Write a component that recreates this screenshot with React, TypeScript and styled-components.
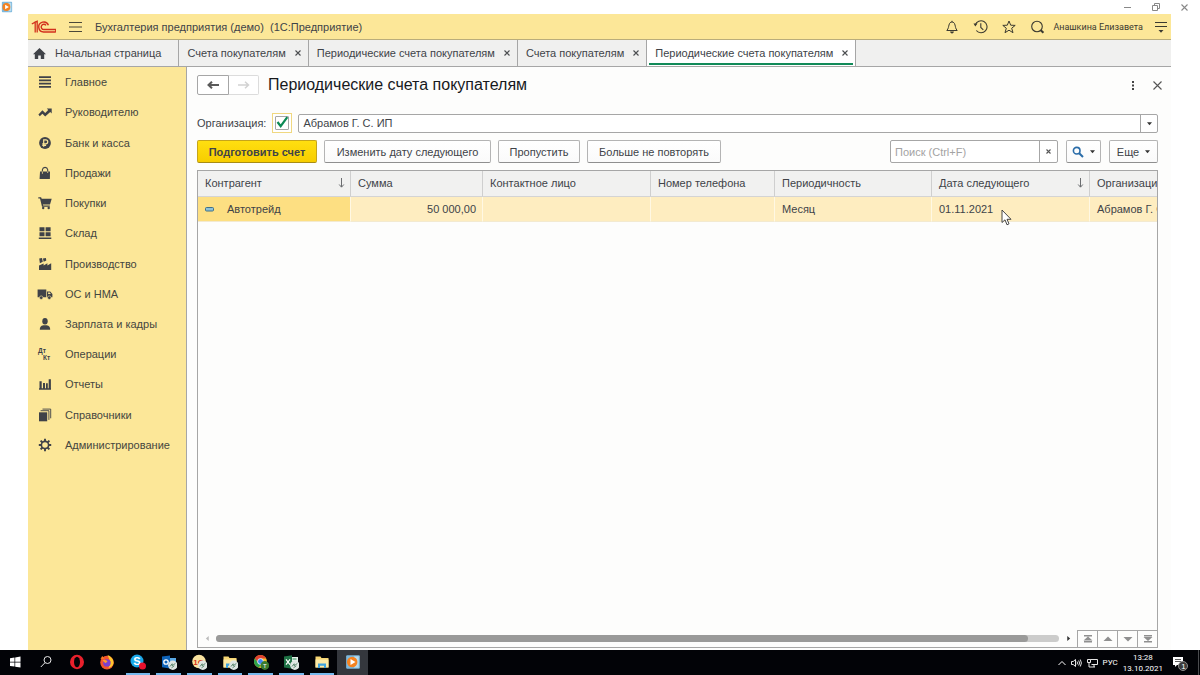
import React from "react";
import styled, { createGlobalStyle, css } from "styled-components";

const line = "#a6a6a6";
const yellow = "#fce798";
const ink = "#404348";
const mark = "#3f4248";

const GlobalStyle = createGlobalStyle`
  *, *::before, *::after { box-sizing: border-box; }
  html, body { margin: 0; height: 100%; }
  #root { height: 100%; }
  body {
    background: #fff;
    color: ${ink};
    font-family: "Liberation Sans", Arial, sans-serif;
    font-size: 11px;
    line-height: 16px;
    overflow: hidden;
  }
  button, input, select { font: inherit; color: inherit; margin: 0; }
  button { cursor: pointer; }
  svg { display: block; flex: none; }
`;

const Screen = styled.div`
  display: flex;
  flex-direction: column;
  height: 100vh;
`;

const WindowBar = styled.div`
  display: flex;
  align-items: center;
  flex: none;
  height: 14px;
  padding: 0 12px 0 1px;
`;

const WindowButtons = styled.div`
  display: flex;
  gap: 19px;
  margin-left: auto;
`;

const PlainButton = styled.button`
  display: flex;
  align-items: center;
  justify-content: center;
  flex: none;
  padding: 0;
  border: 0;
  background: none;
`;

const AppFrame = styled.div`
  display: flex;
  flex-direction: column;
  flex: 1;
  min-height: 0;
  margin: 0 29px 0 28px;
  background: #fdfdfc;
`;

const Header = styled.header`
  display: flex;
  align-items: center;
  flex: none;
  gap: 13px;
  height: 26px;
  padding: 0 3px;
  background: ${yellow};
  border-bottom: 1px solid #b9ad7b;
`;

const AppTitle = styled.span`
  white-space: pre;
`;

const HeaderTools = styled.div`
  display: flex;
  align-items: center;
  gap: 14px;
  margin-left: auto;
`;

const User = styled.a`
  margin: 0 -3px 0 -6px;
  color: #3b3a30;
  font-family: Roboto, sans-serif;
  font-size: 9px;
  text-decoration: none;
`;

const Tabs = styled.nav`
  display: flex;
  flex: none;
  height: 27px;
  background: #f0f0ef;
  border-bottom: 1px solid ${line};
`;

const Tab = styled.div<{ $active?: boolean; $home?: boolean }>`
  display: flex;
  align-items: center;
  gap: 9px;
  padding: ${(p) => (p.$home ? "0 17px 0 5px" : "0 7px 0 8px")};
  border-right: 1px solid ${line};
  ${(p) =>
    p.$active &&
    css`
      background: #fff;
      padding: 0 2px 1px 2px;
    `}
`;

const TabInner = styled.div<{ $active?: boolean }>`
  display: flex;
  align-items: center;
  gap: 9px;
  height: 100%;
  ${(p) =>
    p.$active &&
    css`
      padding: 3px 5px 0 6px;
      border-bottom: 2px solid #118a58;
    `}
`;

const TabLink = styled.a`
  color: inherit;
  text-decoration: none;
  white-space: nowrap;
`;

const Body = styled.div`
  display: flex;
  flex: 1;
  min-height: 0;
`;

const Sidebar = styled.nav`
  flex: none;
  width: 159px;
  background: ${yellow};
  border-right: 1px solid ${line};
`;

const Menu = styled.ul`
  display: flex;
  flex-direction: column;
  height: 393px;
  margin: 0;
  padding: 0;
  list-style: none;
`;

const MenuItem = styled.li`
  display: flex;
  flex: 1;
`;

const MenuLink = styled.a`
  display: flex;
  align-items: center;
  flex: 1;
  gap: 12px;
  padding-left: 9px;
  color: #45463f;
  text-decoration: none;
  white-space: nowrap;
`;

const Main = styled.main`
  display: flex;
  flex-direction: column;
  flex: 1;
  min-width: 0;
  padding: 8px 13px 2px 10px;
`;

const TitleRow = styled.div`
  display: flex;
  align-items: center;
  height: 20px;
`;

const History = styled.div`
  display: flex;
`;

const HistoryButton = styled.button<{ $side: "left" | "right" }>`
  display: flex;
  align-items: center;
  justify-content: center;
  width: 32px;
  height: 20px;
  padding: 0;
  background: #fff;
  border: 1px solid ${(p) => (p.$side === "left" ? line : "#dcdcdc")};
  border-radius: ${(p) => (p.$side === "left" ? "2px 0 0 2px" : "0 2px 2px 0")};
  ${(p) => p.$side === "right" && "border-left: 0; width: 30px;"}
`;

const PageTitle = styled.h1`
  margin: 0 0 0 9px;
  color: #17191c;
  font-size: 16px;
  font-weight: 400;
  line-height: 20px;
`;

const TitleTools = styled.div`
  display: flex;
  align-items: center;
  gap: 18px;
  margin: 0 -4px 0 auto;
`;

const FilterRow = styled.div`
  display: flex;
  align-items: center;
  height: 20px;
  margin-top: 18px;
`;

const CheckFrame = styled.span`
  display: grid;
  place-items: center;
  width: 20px;
  height: 20px;
  margin: 0 6px;
  border: 1px solid #f0d880;
  background: #fff;
  > * { grid-area: 1 / 1; }
`;

const Check = styled.input`
  appearance: none;
  width: 14px;
  height: 14px;
  border: 1px solid ${line};
  border-radius: 1px;
  &:not(:checked) + svg { visibility: hidden; }
`;

const Tick = styled.svg`
  pointer-events: none;
`;

const SelectBox = styled.div`
  display: grid;
  flex: 1;
  align-items: stretch;
  > * { grid-area: 1 / 1; }
`;

const Select = styled.select`
  appearance: none;
  height: 19px;
  padding: 0 20px 0 4px;
  background: #fff;
  border: 1px solid ${line};
  border-radius: 2px;
`;

const SelectArrow = styled.span`
  display: flex;
  align-items: center;
  justify-content: center;
  justify-self: end;
  width: 18px;
  border-left: 1px solid ${line};
  pointer-events: none;
`;

const Toolbar = styled.div`
  display: flex;
  align-items: center;
  gap: 7px;
  height: 23px;
  margin-top: 7px;
`;

const Button = styled.button<{ $primary?: boolean; $width: number }>`
  display: flex;
  align-items: center;
  justify-content: center;
  gap: 6px;
  flex: none;
  width: ${(p) => p.$width}px;
  height: 23px;
  padding: 0;
  background: ${(p) => (p.$primary ? "linear-gradient(#ffdf10, #f7cd00)" : "linear-gradient(#fff, #fafafa)")};
  border: 1px solid ${(p) => (p.$primary ? "#c6a51a" : "#b4b4b4")};
  border-bottom-color: ${(p) => (p.$primary ? "#a88c14" : "#8f8f8f")};
  border-radius: 2px;
  font-weight: ${(p) => (p.$primary ? 700 : 400)};
  white-space: nowrap;
`;

const ToolbarEnd = styled.div`
  display: flex;
  gap: 8px;
  margin-left: auto;
`;

const Search = styled.div`
  display: flex;
  width: 168px;
  height: 23px;
  background: #fff;
  border: 1px solid ${line};
  border-radius: 2px;
`;

const SearchInput = styled.input`
  flex: 1;
  min-width: 0;
  padding: 0 4px;
  border: 0;
  background: none;
  outline: 0;
  &::placeholder { color: #a3a3a3; opacity: 1; }
`;

const ClearButton = styled(PlainButton)`
  width: 18px;
  border-left: 1px solid ${line};
`;

const ListFrame = styled.section`
  display: flex;
  flex-direction: column;
  flex: 1;
  min-height: 0;
  margin-top: 7px;
  border: 1px solid ${line};
`;

const ListView = styled.div`
  flex: 1;
  min-height: 0;
  overflow: hidden;
`;

const Table = styled.table`
  width: 100%;
  table-layout: fixed;
  border-collapse: separate;
  border-spacing: 0;
`;

const Th = styled.th`
  height: 26px;
  padding: 0 5px 1px 7px;
  background: #f1f1f0;
  border-right: 1px solid #cfcfcf;
  border-bottom: 1px solid #d4d4d4;
  font-weight: 400;
  text-align: left;
  white-space: nowrap;
  overflow: hidden;
  &:last-child { border-right: 0; padding-right: 0; }
`;

const HeadCell = styled.span`
  display: flex;
  align-items: center;
  justify-content: space-between;
`;

const Td = styled.td<{ $selected?: boolean; $right?: boolean }>`
  height: 25px;
  padding: 0 6px 0 7px;
  background: ${(p) => (p.$selected ? "#fddf82" : "#feedc0")};
  border-right: 1px solid #fff8e3;
  border-bottom: 1px solid #f3ead0;
  text-align: ${(p) => (p.$right ? "right" : "left")};
  white-space: nowrap;
  overflow: hidden;
  &:last-child { border-right: 0; padding-right: 0; }
`;

const NameCell = styled.span`
  display: flex;
  align-items: center;
  gap: 13px;
`;

const ScrollRow = styled.div`
  display: flex;
  align-items: center;
  flex: none;
  height: 17px;
`;

const ScrollEnd = styled.span`
  display: flex;
  justify-content: center;
  width: 18px;
`;

const Track = styled.div`
  flex: 1;
  height: 7px;
  background: #cccccb;
  border-radius: 4px;
`;

const Thumb = styled.div`
  width: 96.3%;
  height: 7px;
  background: #9a9a99;
  border-radius: 4px;
`;

const StepButton = styled(PlainButton)`
  width: 20px;
  height: 17px;
  border-top: 1px solid ${line};
  border-left: 1px solid ${line};
`;

const Taskbar = styled.footer`
  display: flex;
  flex: none;
  height: 25px;
  padding-right: 1px;
  background: #020307;
  color: #fff;
`;

const TaskList = styled.div`
  display: flex;
  flex: none;
  width: 368px;
`;

const TaskButton = styled.button<{ $state?: "open" | "active" }>`
  display: flex;
  align-items: center;
  justify-content: center;
  flex: 1;
  padding: 0 3px;
  border: 0;
  background: ${(p) => (p.$state === "active" ? "#34373d" : "none")};
  > span {
    display: flex;
    align-items: center;
    justify-content: center;
    width: 100%;
    height: 25px;
    border-bottom: 2px solid ${(p) => (p.$state === "open" ? "#76b9ed" : "transparent")};
  }
`;

const Tray = styled.div`
  display: flex;
  align-items: center;
  gap: 5px;
  margin-left: auto;
  padding-right: 8px;
  border-right: 1px solid #4a4b4e;
  font-family: Roboto, sans-serif;
  font-size: 8px;
  line-height: 11px;
`;

const Clock = styled.time`
  margin-right: 4px;
  text-align: center;
`;

const Cursor = styled.svg`
  position: absolute;
  left: 1001px;
  top: 209px;
  pointer-events: none;
`;

const Caret = ({ w = 5, dir = "down", color = "#333" }: { w?: number; dir?: "down" | "left" | "right"; color?: string }) => (
  <svg width={w} height={w} viewBox="0 0 6 6" fill={color} aria-hidden="true">
    <path d={dir === "down" ? "M0 1.5h6L3 5z" : dir === "left" ? "M4.5 0v6L1 3z" : "M1.5 0v6L5 3z"} />
  </svg>
);

const Cross = ({ size = 7, color = "#4b4d50", stroke = 1.1 }: { size?: number; color?: string; stroke?: number }) => (
  <svg width={size} height={size} viewBox={`0 0 ${size} ${size}`} stroke={color} strokeWidth={stroke} aria-hidden="true">
    <path d={`M.5 .5L${size - 0.5} ${size - 0.5}M${size - 0.5} .5L.5 ${size - 0.5}`} />
  </svg>
);

const PlayerIcon = ({ size }: { size: number }) => (
  <svg width={size} height={size} viewBox="0 0 14 14">
    <rect x="1" y="1" width="12" height="12" rx="1" fill="#7db8dc" />
    <rect x="8" y="2" width="4" height="10" fill="#b9dcef" />
    <circle cx="6.3" cy="7" r="4.6" fill="#f58220" />
    <path d="M4.8 4.4v5.2L9.2 7z" fill="#fff" />
  </svg>
);

const Logo = () => (
  <svg width="25" height="14" viewBox="0 0 25 14" fill="none" stroke="#d2301c" aria-label="1C">
    <path d="M.8 4L4.200 2.200V12.400M6.200 12.400V1.300L3.400 2.400" strokeWidth="1.300" />
    <path d="M17.400 5.200A5 5 0 1 0 12.900 12H24.800" strokeWidth="1.400" />
    <path d="M15 5.400A2.600 2.600 0 1 0 12.900 9.500H24.800V12" strokeWidth="1.400" />
  </svg>
);

const menuIcons: Record<string, React.ReactNode> = {
  main: <path d="M1 1.2h12v1.7H1zM1 4.5h12v1.7H1zM1 7.8h12v1.7H1zM1 11.1h12v1.7H1z" />,
  trend: <path d="M.4 9.4l4-4.2 2.8 2.7 3-3L8.8 3.5h4.9v4.9l-1.5-1.5-5 4.7-2.8-2.8-2.6 2.4z" />,
  ruble: (
    <>
      <circle cx="7" cy="7" r="5.9" />
      <path d="M5.7 10.8V3.9h2.1a1.8 1.8 0 0 1 0 3.9H4.3M4.3 9.3h3.8" fill="none" stroke={yellow} strokeWidth="1.2" />
    </>
  ),
  bag: (
    <>
      <path d="M2 5.4h10l-.1 7.6H1.6z" />
      <path d="M4.4 7.6V3.6a2.7 2.7 0 0 1 5.3 0v3.2" fill="none" stroke={mark} strokeWidth="1.1" />
      <path d="M4.4 7.8V5.4M9.7 7V5.4" fill="none" stroke={yellow} strokeWidth=".8" />
    </>
  ),
  cart: (
    <>
      <path d="M.3 1.2h2.8l.6 1.6h10L12 8.6H4.9l.3.9h6.6v1.2H4L2 2.5H.3z" />
      <circle cx="5.2" cy="12" r="1.2" />
      <circle cx="10.7" cy="12" r="1.2" />
    </>
  ),
  store: <path d="M1.5 1.3h5v4h-5zM7.6 1.3h5v4h-5zM1.5 6.2h5v4h-5zM7.6 6.2h5v4h-5zM.8 11.4h12.5v1.5H.8z" />,
  factory: <path d="M1 13V8.400l4.600-2v2.200L9.400 6.200v2.200L13.200 6.200V13zM1.200 1.500l2.800-.4.800 3.700-2.900 1.500zM4.900 1.500l3-.4.4 2.400L5.700 4.800z" />,
  truck: (
    <>
      <path d="M-.4 2.600h8.700v7.700H-.4zM9 4.500h3.200l2.200 2.600v3.200H9z" />
      <path d="M10.100 5.500h1.700l1 1.500h-2.700z" fill={yellow} />
      <circle cx="3.200" cy="10.700" r="1.800" stroke={yellow} strokeWidth=".6" />
      <circle cx="11.300" cy="10.700" r="1.800" stroke={yellow} strokeWidth=".6" />
    </>
  ),
  person: (
    <>
      <ellipse cx="7" cy="4.200" rx="2.700" ry="3.300" />
      <path d="M1.800 12.800c0-3 .8-4 3.600-4.600h3.200c2.800.6 3.600 1.600 3.600 4.600z" />
    </>
  ),
  debit: (
    <g fontFamily="Liberation Sans, sans-serif" fontWeight="700" fontSize="6.500">
      <text x="0" y="6">Дт</text>
      <text x="5" y="13">Кт</text>
    </g>
  ),
  chart: <path d="M1.500 4.200h2.200v7H1.500zM5 6h2v5.500H5zM8 6.200h1.800v5H8zM10.700 2.200h2.200v9h-2.200zM1 11.300h12v1.500H1z" />,
  books: (
    <>
      <path d="M1 4.300h8.200v9H1z" />
      <path d="M2.600 2.700h8.300v9.200M4.500 1.100h8.200v9.200" fill="none" stroke={mark} strokeWidth=".9" />
    </>
  ),
  gear: (
    <>
      <circle cx="7" cy="7" r="3.600" fill="none" stroke={mark} strokeWidth="1.600" />
      <path d="M7 .8v2.600M7 10.600v2.600M.8 7h2.600M10.600 7h2.600M2.600 2.600l1.900 1.900M9.500 9.500l1.900 1.900M11.400 2.600L9.500 4.500M4.500 9.500l-1.900 1.900" stroke={mark} strokeWidth="1.900" />
    </>
  ),
};

const menu = [
  ["main", "Главное"],
  ["trend", "Руководителю"],
  ["ruble", "Банк и касса"],
  ["bag", "Продажи"],
  ["cart", "Покупки"],
  ["store", "Склад"],
  ["factory", "Производство"],
  ["truck", "ОС и НМА"],
  ["person", "Зарплата и кадры"],
  ["debit", "Операции"],
  ["chart", "Отчеты"],
  ["books", "Справочники"],
  ["gear", "Администрирование"],
];

const tabs = ["Счета покупателям", "Периодические счета покупателям", "Счета покупателям", "Периодические счета покупателям"];

const columns: { title: string; width?: number; sorted?: boolean }[] = [
  { title: "Контрагент", width: 153, sorted: true },
  { title: "Сумма", width: 132 },
  { title: "Контактное лицо", width: 168 },
  { title: "Номер телефона", width: 124 },
  { title: "Периодичность", width: 157 },
  { title: "Дата следующего", width: 158, sorted: true },
  { title: "Организация" },
];

const SortArrow = () => (
  <svg width="7" height="10" viewBox="0 0 7 10" fill="none" stroke="#6b6d70" aria-hidden="true">
    <path d="M3.500 0v9M1.200 6.500l2.300 2.700 2.300-2.700" />
  </svg>
);

const SyncBadge = () => (
  <g>
    <circle cx="11.800" cy="11.300" r="4.700" fill="#dfe5e2" />
    <path d="M9 12.500l2.200-2.700v2l3.200-2.400M10.500 13.800l2.800-2" fill="none" stroke="#4e7d62" strokeWidth=".9" />
  </g>
);

const Folder = () => (
  <g>
    <path d="M1.500 2.500h5l1 1.500h7v9.500h-13z" fill="#f7d774" />
    <path d="M1.500 5.500h13v8h-13z" fill="#fce9a5" />
    <path d="M4 9.500h8v4.500h-2v-2.300H6V14H4z" fill="#3fa2dd" />
  </g>
);

const taskIcons: { name: string; state?: "open" | "active"; art: React.ReactNode }[] = [
  { name: "Пуск", art: <path d="M3 4.200l4.500-.7v4.200H3zM8.200 3.400L13.500 2.600v5.100H8.200zM3 8.400h4.500v4.200L3 12zM8.200 8.400h5.300v5.100l-5.300-.8z" fill="#fff" /> },
  { name: "Поиск", art: <g fill="none" stroke="#e8e8e8"><circle cx="9.500" cy="6" r="3.500" /><path d="M7 8.700L2.800 13" /></g> },
  { name: "Opera", art: <g><ellipse cx="8" cy="8" rx="7" ry="7.200" fill="#e8202c" /><ellipse cx="8" cy="8" rx="3" ry="5.200" fill="#020307" /></g> },
  {
    name: "Firefox",
    art: (
      <g>
        <circle cx="8" cy="8.600" r="6.800" fill="#f2542d" />
        <path d="M8.500 1c3 1 6.500 4 6 8.500-1 3-3 4-5 4.500l2-6z" fill="#ffc62e" />
        <path d="M1.500 5l1.700-3 2.300 2.500z" fill="#ff7b22" />
        <circle cx="7.900" cy="8.900" r="3.700" fill="#7b3fd0" />
        <path d="M3.500 6.500c2-1.500 4 0 5 1l-2 1.800z" fill="#ff9a2e" />
      </g>
    ),
  },
  {
    name: "Skype",
    state: "open",
    art: (
      <g>
        <circle cx="7" cy="7" r="6.500" fill="#1aa7e8" />
        <text x="3.300" y="11" fontSize="11" fontWeight="700" fill="#fff" fontFamily="Liberation Sans, sans-serif">S</text>
        <circle cx="12.500" cy="12" r="3.500" fill="#e8112d" />
      </g>
    ),
  },
  {
    name: "Outlook",
    state: "open",
    art: (
      <g>
        <path d="M8 4h7v8H8z" fill="#5aa9e6" />
        <path d="M1 2.500L9 1.500v13l-8-1.200z" fill="#0f63b8" />
        <circle cx="5" cy="8" r="2.200" fill="none" stroke="#fff" strokeWidth="1.300" />
        <SyncBadge />
      </g>
    ),
  },
  {
    name: "1С:Предприятие",
    state: "open",
    art: (
      <g>
        <circle cx="8" cy="7.500" r="6.800" fill="#f9e3a0" />
        <text x="2.300" y="10.500" fontSize="8" fontWeight="700" fill="#d2301c" fontFamily="Liberation Sans, sans-serif">1С</text>
        <SyncBadge />
      </g>
    ),
  },
  { name: "Проводник", state: "open", art: <g><Folder /><SyncBadge /></g> },
  {
    name: "Chrome",
    state: "open",
    art: (
      <g>
        <circle cx="7.500" cy="7.500" r="6.500" fill="#f5c02c" />
        <path d="M1.900 4.300A6.500 6.500 0 0 1 13.200 4.500H7.500L5 8.800z" fill="#e0412f" />
        <path d="M1.900 4.300L5 9l2.500 1.500-1.500 3.300A6.500 6.500 0 0 1 1.900 4.300z" fill="#2ba24c" />
        <circle cx="7.500" cy="7.500" r="2.900" fill="#3f86f0" stroke="#fff" strokeWidth=".8" />
        <circle cx="11.800" cy="11.500" r="4.400" fill="#3a7a2e" />
        <text x="10" y="13.800" fontSize="6" fill="#fff" fontFamily="Liberation Sans, sans-serif">T</text>
      </g>
    ),
  },
  {
    name: "Excel",
    state: "open",
    art: (
      <g>
        <path d="M8 3h7v10H8z" fill="#e6f1ea" />
        <path d="M9.500 5h4M9.500 7.500h4M9.500 10h4" stroke="#2f8a57" />
        <path d="M1 2.500L9 1.200v13.600l-8-1.300z" fill="#1f7145" />
        <path d="M3 5.300l4 5.400M7 5.300l-4 5.400" stroke="#fff" strokeWidth="1.200" />
        <SyncBadge />
      </g>
    ),
  },
  { name: "Файлы", state: "open", art: <Folder /> },
  { name: "Проигрыватель", state: "active", art: <PlayerIcon size={16} /> },
];

export default function App() {
  return (
    <Screen>
      <GlobalStyle />
      <WindowBar>
        <PlayerIcon size={12} />
        <WindowButtons>
          <PlainButton aria-label="Свернуть">
            <svg width="10" height="10" stroke="#888"><path d="M1 5.500h7" /></svg>
          </PlainButton>
          <PlainButton aria-label="Развернуть">
            <svg width="10" height="10" fill="none" stroke="#888"><path d="M.5 3.500h5v5h-5zM2.500 3V1.500h5v5H6" /></svg>
          </PlainButton>
          <PlainButton aria-label="Закрыть"><Cross color="#888" /></PlainButton>
        </WindowButtons>
      </WindowBar>

      <AppFrame>
        <Header>
          <Logo />
          <PlainButton aria-label="Меню">
            <svg width="13" height="12" viewBox="0 0 13 12" stroke="#4b4838" strokeWidth="1.200"><path d="M0 1.500h13M0 6h13M0 10.500h13" /></svg>
          </PlainButton>
          <AppTitle>{"Бухгалтерия предприятия (демо)  (1С:Предприятие)"}</AppTitle>
          <HeaderTools>
            <PlainButton aria-label="Уведомления">
              <svg width="14" height="14" viewBox="0 0 14 14" fill="none" stroke="#3b3a30"><path d="M1.800 10.500C3.600 8.500 3.500 6.500 4 5c.4-2 1.500-3 3-3s2.600 1 3 3c.5 1.500.4 3.500 2.200 5.500zM7 2V.8" /><path d="M5.500 12h3l-1.500 1.200z" fill="#3b3a30" /></svg>
            </PlainButton>
            <PlainButton aria-label="История">
              <svg width="15" height="14" viewBox="0 0 15 14" fill="none" stroke="#3b3a30" strokeWidth="1.100"><path d="M2.300 5A6 6 0 1 1 3.300 10.500M7.800 3.300V7.500l2.500 2.300" /><path d="M.5 3.500h4L2.300 6.600z" fill="#3b3a30" stroke="none" /></svg>
            </PlainButton>
            <PlainButton aria-label="Избранное">
              <svg width="14" height="14" viewBox="0 0 14 14" fill="none" stroke="#3b3a30"><path d="M7 1l1.700 4.200 4.500.2-3.500 2.800 1.300 4.500L7 10.200l-4 2.500 1.300-4.500L.8 5.400l4.500-.2z" /></svg>
            </PlainButton>
            <PlainButton aria-label="Поиск">
              <svg width="15" height="14" viewBox="0 0 15 14" fill="none" stroke="#3b3a30"><circle cx="7" cy="6.500" r="5.300" strokeWidth="1.100" /><path d="M10.800 10.200l2.600 2.600" strokeWidth="2" /></svg>
            </PlainButton>
            <User href="#user">Анашкина Елизавета</User>
            <PlainButton aria-label="Настройки">
              <svg width="14" height="14" viewBox="0 0 14 14" fill="none" stroke="#3b3a30" strokeWidth="1.100"><path d="M1 2.500h12M1 6.500h12" /><path d="M4.500 10h5L7 12.800z" fill="#3b3a30" stroke="none" /></svg>
            </PlainButton>
          </HeaderTools>
        </Header>

        <Tabs>
          <Tab $home>
            <svg width="13" height="13" viewBox="0 0 13 13" fill={mark}><path d="M6.500 1L13 7.200h-1.800V12H7.800V8.500H5.200V12H1.800V7.200H0z" /></svg>
            <TabLink href="#home">Начальная страница</TabLink>
          </Tab>
          {tabs.map((title, i) => {
            const active = i === tabs.length - 1;
            return (
              <Tab key={i} $active={active}>
                <TabInner $active={active}>
                  <TabLink href={`#tab${i}`} aria-current={active ? "page" : undefined}>{title}</TabLink>
                  <PlainButton aria-label="Закрыть вкладку"><Cross size={6} /></PlainButton>
                </TabInner>
              </Tab>
            );
          })}
        </Tabs>

        <Body>
          <Sidebar>
            <Menu>
              {menu.map(([icon, title]) => (
                <MenuItem key={icon}>
                  <MenuLink href={`#${icon}`}>
                    <svg width="16" height="14" viewBox="-1 0 16 14" fill={mark} aria-hidden="true">{menuIcons[icon]}</svg>
                    {title}
                  </MenuLink>
                </MenuItem>
              ))}
            </Menu>
          </Sidebar>

          <Main>
            <TitleRow>
              <History>
                <HistoryButton $side="left" aria-label="Назад">
                  <svg width="12" height="8" viewBox="0 0 12 8" fill="none" stroke="#5a5a5a" strokeWidth="2"><path d="M12 4H1.500M5 .7L1.500 4 5 7.300" /></svg>
                </HistoryButton>
                <HistoryButton $side="right" aria-label="Вперед" disabled>
                  <svg width="12" height="8" viewBox="0 0 12 8" fill="none" stroke="#d2d2d2" strokeWidth="1.500"><path d="M0 4h10.500M7 .7L10.500 4 7 7.300" /></svg>
                </HistoryButton>
              </History>
              <PageTitle>Периодические счета покупателям</PageTitle>
              <TitleTools>
                <PlainButton aria-label="Действия">
                  <svg width="4" height="11" fill="#444"><path d="M1 1h2v2H1zM1 4.500h2v2H1zM1 8h2v2H1z" /></svg>
                </PlainButton>
                <PlainButton aria-label="Закрыть"><Cross size={9} color="#555" /></PlainButton>
              </TitleTools>
            </TitleRow>

            <FilterRow>
              <label htmlFor="use-org">Организация:</label>
              <CheckFrame>
                <Check id="use-org" type="checkbox" defaultChecked />
                <Tick width="14" height="14" viewBox="0 0 14 14" fill="none" stroke="#0d8a55" strokeWidth="2.200"><path d="M2.500 6l3.200 4.200L12.300 1.200" /></Tick>
              </CheckFrame>
              <SelectBox>
                <Select aria-label="Организация"><option>Абрамов Г. С. ИП</option></Select>
                <SelectArrow><Caret /></SelectArrow>
              </SelectBox>
            </FilterRow>

            <Toolbar>
              <Button $primary $width={120}>Подготовить счет</Button>
              <Button $width={167}>Изменить дату следующего</Button>
              <Button $width={82}>Пропустить</Button>
              <Button $width={134}>Больше не повторять</Button>
              <ToolbarEnd>
                <Search>
                  <SearchInput type="text" placeholder="Поиск (Ctrl+F)" aria-label="Поиск" />
                  <ClearButton aria-label="Очистить"><Cross size={5} color="#555" /></ClearButton>
                </Search>
                <Button $width={35} aria-label="Найти">
                  <svg width="12" height="12" viewBox="0 0 12 12" fill="none" stroke="#2a6ca8"><circle cx="4.700" cy="4.700" r="3.300" strokeWidth="1.600" /><path d="M7.200 7.200l3.800 3.800" strokeWidth="2" /></svg>
                  <Caret />
                </Button>
                <Button $width={49}>Еще <Caret /></Button>
              </ToolbarEnd>
            </Toolbar>

            <ListFrame>
              <ListView>
                <Table>
                  <colgroup>
                    {columns.map((c) => <col key={c.title} width={c.width} />)}
                  </colgroup>
                  <thead>
                    <tr>
                      {columns.map((c) => (
                        <Th key={c.title} scope="col"><HeadCell>{c.title}{c.sorted && <SortArrow />}</HeadCell></Th>
                      ))}
                    </tr>
                  </thead>
                  <tbody>
                    <tr>
                      <Td $selected>
                        <NameCell>
                          <svg width="9" height="5"><rect x=".5" y=".5" width="8" height="3.500" rx="1" fill="#8fc1d6" stroke="#3f7088" /></svg>
                          Автотрейд
                        </NameCell>
                      </Td>
                      <Td $right>50 000,00</Td>
                      <Td />
                      <Td />
                      <Td>Месяц</Td>
                      <Td>01.11.2021</Td>
                      <Td>Абрамов Г. С. ИП</Td>
                    </tr>
                  </tbody>
                </Table>
              </ListView>
              <ScrollRow>
                <ScrollEnd><Caret dir="left" color="#bbb" /></ScrollEnd>
                <Track><Thumb /></Track>
                <ScrollEnd><Caret dir="right" /></ScrollEnd>
                <StepButton aria-label="В начало"><svg width="10" height="8" fill="#8f8f8f"><path d="M1 0h8v1.500H1zM5 1.500l4.500 4h-9zM1 6h8v1.500H1z" /></svg></StepButton>
                <StepButton aria-label="Вверх"><svg width="10" height="6" fill="#8f8f8f"><path d="M5 .5l4.500 4.500h-9z" /></svg></StepButton>
                <StepButton aria-label="Вниз"><svg width="10" height="6" fill="#8f8f8f"><path d="M5 5.500L9.500 1h-9z" /></svg></StepButton>
                <StepButton aria-label="В конец"><svg width="10" height="8" fill="#8f8f8f"><path d="M1 0h8v1.500H1zM5 6l4.500-4h-9zM1 6h8v1.500H1z" /></svg></StepButton>
              </ScrollRow>
            </ListFrame>
          </Main>
        </Body>
      </AppFrame>

      <Taskbar>
        <TaskList>
          {taskIcons.map((t) => (
            <TaskButton key={t.name} $state={t.state} aria-label={t.name}>
              <span><svg width="16" height="16" viewBox="0 0 16 16">{t.art}</svg></span>
            </TaskButton>
          ))}
        </TaskList>
        <Tray>
          <svg width="8" height="6" fill="none" stroke="#fff"><path d="M.5 5L4 1.500 7.500 5" /></svg>
          <svg width="11" height="10" fill="none" stroke="#fff" strokeWidth=".9"><path d="M.5 3.500h1.700L4.500 1.500v7L2.200 6.500H.5zM6 3.500q1 1.500 0 3M7.700 2.500q1.700 2.500 0 5M9.300 1.500q2.200 3.500 0 7" /></svg>
          <svg width="11" height="10" fill="none" stroke="#fff" strokeWidth=".9"><path d="M3.500 1.500h7v5h-6M.5 1.500h3v3h-3zM2 4.500v4.500h6M7 6.500V9" /></svg>
          <span>РУС</span>
          <Clock>13:28<br />13.10.2021</Clock>
          <svg width="18" height="18" viewBox="2 0 18 18">
            <path d="M3 3h10v8H7l-2 2v-2H3z" fill="#fff" />
            <path d="M5 5.500h6M5 7.500h6" stroke="#333" strokeWidth=".8" />
            <circle cx="13" cy="12" r="4.500" fill="#3a3a3a" stroke="#8a8a8a" />
            <text x="11.300" y="14.800" fontSize="8" fill="#fff" fontFamily="Liberation Sans, sans-serif">1</text>
          </svg>
        </Tray>
      </Taskbar>

      <Cursor width="11" height="17" viewBox="0 0 11 17" fill="#fff" stroke="#333" strokeWidth=".9">
        <path d="M1 1v12.500l3-2.700 2 5 2-1-2-4.500h4z" />
      </Cursor>
    </Screen>
  );
}
